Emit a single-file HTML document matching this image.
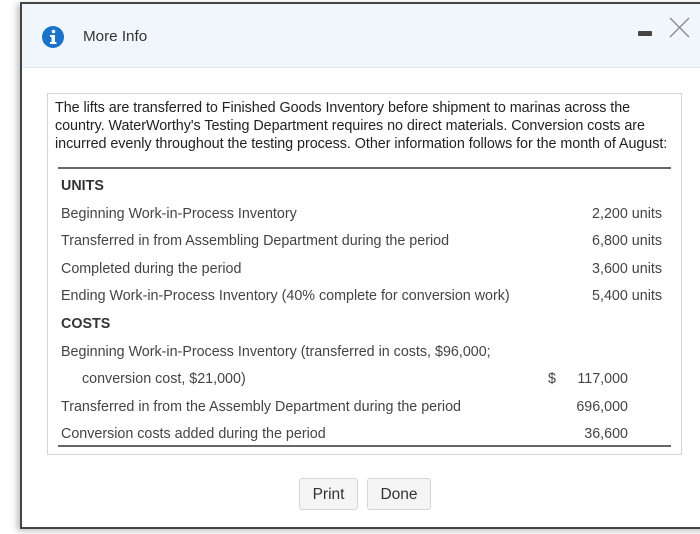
<!DOCTYPE html>
<html><head><style>
*{margin:0;padding:0;box-sizing:border-box}
body{width:700px;height:534px;background:#fff;position:relative;overflow:hidden;font-family:"Liberation Sans",Arial,sans-serif}
.dlg{position:absolute;left:20px;top:2px;width:700px;height:527px;border:2px solid #444;border-right:none;background:#fff;box-shadow:-3px 2px 6px rgba(0,0,0,.25)}
.hdr{position:absolute;left:22px;top:4px;width:678px;height:64px;background:#f1f5fc;border-bottom:1px solid #dde5f0}
.t{position:absolute;white-space:nowrap}
.box{position:absolute;left:47px;top:93px;width:635px;height:362px;border:1px solid #d4d4d4}
.p{position:absolute;left:55px;top:99px;font-size:14.35px;line-height:18px;color:#222;white-space:nowrap;letter-spacing:-0.05px}
.r{position:absolute;font-size:14.3px;color:#444;white-space:nowrap}
.b{position:absolute;top:478px;height:32px;border:1px solid #d6d6d6;border-radius:3px;background:#f5f5f5;font-size:15.5px;color:#333;text-align:center;line-height:31px}
</style></head><body>
<div class="dlg"></div>
<div class="hdr"></div>
<svg style="position:absolute;left:41px;top:25px" width="24" height="24" viewBox="0 0 24 24"><circle cx="12" cy="12" r="11" fill="#1a73c8"/><circle cx="12.5" cy="6.5" r="1.8" fill="#fff"/><path d="M9 10h5v7h1.5v2h-6.5v-2h1.5v-5h-1.5z" fill="#fff"/></svg>
<div class="t" style="left:83px;top:28px;font-size:15.2px;color:#333">More Info</div>
<div style="position:absolute;left:638px;top:31px;width:14px;height:5px;background:#444;border-radius:1px"></div>
<svg style="position:absolute;left:669px;top:17px" width="21" height="21"><path d="M1 1L20 20M20 1L1 20" stroke="#888" stroke-width="1.3"/></svg>
<div class="box"></div>
<div class="p">The lifts are transferred to Finished Goods Inventory before shipment to marinas across the<br>country. WaterWorthy's Testing Department requires no direct materials. Conversion costs are<br>incurred evenly throughout the testing process. Other information follows for the month of August:</div>
<div style="position:absolute;left:58px;top:167px;width:613px;height:2px;background:#666"></div>
<div class="r" style="left:61px;top:178px;font-weight:bold;color:#333">UNITS</div>
<div class="r" style="left:61px;top:206px">Beginning Work-in-Process Inventory</div>
<div class="r" style="left:61px;top:233px">Transferred in from Assembling Department during the period</div>
<div class="r" style="left:61px;top:261px">Completed during the period</div>
<div class="r" style="left:61px;top:288px">Ending Work-in-Process Inventory (40% complete for conversion work)</div>
<div class="r" style="right:38px;top:206px">2,200 units</div>
<div class="r" style="right:38px;top:233px">6,800 units</div>
<div class="r" style="right:38px;top:261px">3,600 units</div>
<div class="r" style="right:38px;top:288px">5,400 units</div>
<div class="r" style="left:61px;top:316px;font-weight:bold;color:#333">COSTS</div>
<div class="r" style="left:61px;top:344px">Beginning Work-in-Process Inventory (transferred in costs, $96,000;</div>
<div class="r" style="left:82px;top:371px">conversion cost, $21,000)</div>
<div class="r" style="left:61px;top:399px">Transferred in from the Assembly Department during the period</div>
<div class="r" style="left:61px;top:426px">Conversion costs added during the period</div>
<div class="r" style="left:548px;top:371px">$</div>
<div class="r" style="right:72px;top:371px">117,000</div>
<div class="r" style="right:72px;top:399px">696,000</div>
<div class="r" style="right:72px;top:426px">36,600</div>
<div style="position:absolute;left:58px;top:445px;width:613px;height:2px;background:#666"></div>
<div class="b" style="left:299px;width:59px">Print</div>
<div class="b" style="left:367px;width:64px">Done</div>
</body></html>
